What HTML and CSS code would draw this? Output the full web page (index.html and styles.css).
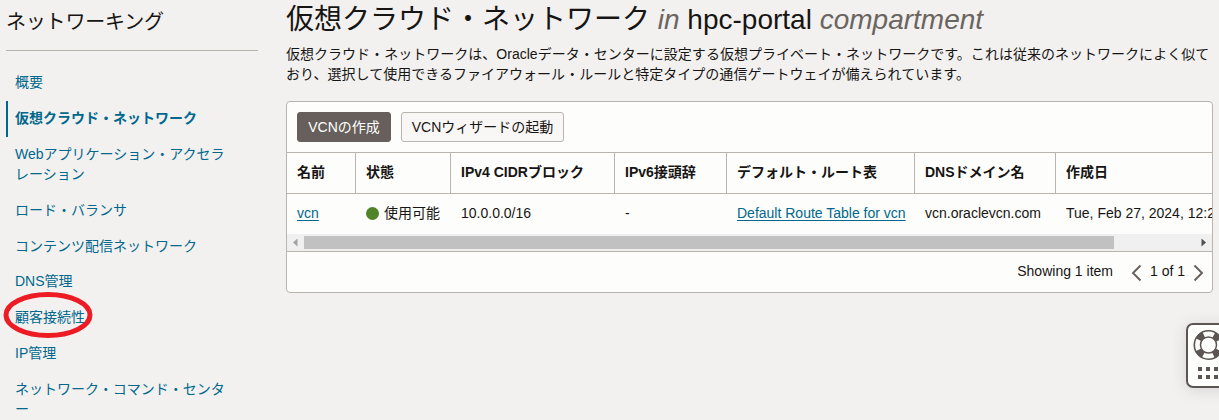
FILE: index.html
```html
<!DOCTYPE html>
<html lang="ja">
<head>
<meta charset="utf-8">
<title>仮想クラウド・ネットワーク</title>
<link rel="stylesheet" href="styles.css">
</head>
<body>
<div class="page">
  <aside class="sidebar">
    <h2 class="sidebar-title">ネットワーキング</h2>
    <nav class="nav">
      <a class="nav-item">概要</a>
      <a class="nav-item active">仮想クラウド・ネットワーク</a>
      <a class="nav-item">Webアプリケーション・アクセラ<br>レーション</a>
      <a class="nav-item">ロード・バランサ</a>
      <a class="nav-item">コンテンツ配信ネットワーク</a>
      <a class="nav-item">DNS管理</a>
      <a class="nav-item marked">顧客接続性
        <svg class="mark" width="90" height="48" viewBox="0 0 90 48"><ellipse cx="45" cy="24" rx="42" ry="20.500" fill="none" stroke="#ed1c24" stroke-width="5"/></svg>
      </a>
      <a class="nav-item">IP管理</a>
      <a class="nav-item">ネットワーク・コマンド・センタ<br>ー</a>
    </nav>
  </aside>
  <main class="main">
    <h1 class="title">仮想クラウド・ネットワーク <em>in</em> hpc-portal <em>compartment</em></h1>
    <p class="desc">仮想クラウド・ネットワークは、Oracleデータ・センターに設定する仮想プライベート・ネットワークです。これは従来のネットワークによく似て<br>おり、選択して使用できるファイアウォール・ルールと特定タイプの通信ゲートウェイが備えられています。</p>
    <section class="card">
      <div class="actions">
        <button class="btn primary">VCNの作成</button>
        <button class="btn">VCNウィザードの起動</button>
      </div>
      <div class="table">
        <div class="row head">
          <span class="cell">名前</span><span class="cell">状態</span><span class="cell">IPv4 CIDRブロック</span><span class="cell">IPv6接頭辞</span><span class="cell">デフォルト・ルート表</span><span class="cell">DNSドメイン名</span><span class="cell">作成日</span>
        </div>
        <div class="row">
          <span class="cell"><a class="link">vcn</a></span><span class="cell status"><i class="dot"></i>使用可能</span><span class="cell">10.0.0.0/16</span><span class="cell">-</span><span class="cell"><a class="link">Default Route Table for vcn</a></span><span class="cell">vcn.oraclevcn.com</span><span class="cell">Tue, Feb 27, 2024, 12:2</span>
        </div>
      </div>
      <div class="scrollbar">
        <svg width="17" height="17" viewBox="0 0 17 17"><path d="M10.500 4.500v8L6 8.500z" fill="#a3a3a3"/></svg>
        <div class="track"><div class="thumb"></div></div>
        <svg width="17" height="17" viewBox="0 0 17 17"><path d="M6.500 4.500v8l4.500-4z" fill="#505050"/></svg>
      </div>
      <div class="footer">
        <span class="count">Showing 1 item</span>
        <svg class="chev" width="11" height="18" viewBox="0 0 11 18"><path d="M9.500 1.500L2 9l7.500 7.500" fill="none" stroke="#665f5b" stroke-width="1.900"/></svg>
        <span class="pages">1 of 1</span>
        <svg class="chev" width="11" height="18" viewBox="0 0 11 18"><path d="M1.500 1.500L9 9l-7.500 7.500" fill="none" stroke="#665f5b" stroke-width="1.900"/></svg>
      </div>
    </section>
  </main>
  <div class="help">
    <svg width="32" height="61" viewBox="0 0 32 61">
      <g fill="none" stroke="#5b5652">
        <circle cx="20.500" cy="20" r="11.200" stroke-width="6.500" stroke-dasharray="7.200 10.393" stroke-dashoffset="-5.196"/>
        <circle cx="20.500" cy="20" r="14.200" stroke-width="1.600"/>
        <circle cx="20.500" cy="20" r="8" stroke-width="1.500"/>
      </g>
      <path d="M10 42h4v4h-4zM18 42h4v4h-4zM26 42h4v4h-4zM10 50h4v4h-4zM18 50h4v4h-4zM26 50h4v4h-4z" fill="#5b5652"/>
    </svg>
  </div>
</div>
</body>
</html>
```
FILE: styles.css
```css
* { box-sizing: border-box; }
body {
  margin: 0;
  background: #f3f1f0;
  color: #161513;
  font: 14px/20px "Liberation Sans", "Noto Sans CJK JP", sans-serif;
  overflow: hidden;
}
.page {
  position: relative;
  display: flex;
  height: 420px;
  overflow: hidden;
  white-space: nowrap;
}
.sidebar { width: 286px; padding-left: 6px; flex: none; }
.sidebar-title {
  margin: 0;
  width: 252px;
  height: 51px;
  padding-top: 7px;
  border-bottom: 1px solid #b9b4ab;
  font-size: 20px;
  line-height: 30px;
  font-weight: 400;
  letter-spacing: -0.2px;
}
.nav { display: flex; flex-direction: column; padding-top: 14px; }
.nav-item {
  padding: 8px 0 8px 7px;
  border-left: 2px solid transparent;
  line-height: 19.9px;
  color: #00688c;
}
.nav-item.active { font-weight: 700; border-color: #00688c; }
.marked { position: relative; }
.mark { position: absolute; left: -5px; top: -9px; }
.main { width: 927px; flex: none; }
.title { margin: 0; font-size: 28px; line-height: 40px; font-weight: 400; }
.title em { color: #6b6560; }
.desc { margin: 4px 0 0; letter-spacing: 0.02px; }
.card {
  height: 192px;
  margin-top: 17px;
  border: 1px solid #b9b4ae;
  border-radius: 4px;
  background: #fdfdfb;
  overflow: hidden;
}
.actions { display: flex; gap: 10px; height: 50px; padding: 10px; }
.btn {
  width: 163px;
  height: 30px;
  padding: 0;
  border: 1px solid #b9b4ae;
  border-radius: 3px;
  background: #f9f7f5;
  color: #161513;
  font: inherit;
  line-height: 28px;
}
.btn.primary { width: 94px; background: #665f5b; border-color: #665f5b; color: #fff; }
.row {
  display: grid;
  grid-template-columns: 68px 95px 164px 112px 188px 141px 157px;
  height: 40px;
}
.cell { padding: 9px 0 11px 10px; }
.head { height: 42px; border: solid #b9b4ae; border-width: 1px 0; font-weight: 700; }
.head .cell + .cell { border-left: 1px solid #b9b4ae; }
.row:not(.head) .cell + .cell { padding-left: 11px; }
.status { display: flex; align-items: center; gap: 5px; }
.dot { width: 13px; height: 13px; border-radius: 50%; background: #4f8428; }
.link { color: #00688c; text-decoration: underline; text-underline-offset: 2px; }
.scrollbar { display: flex; height: 17px; background: #f1f0f0; }
.track { flex: 1; padding: 2px 81px 2px 0; }
.thumb { height: 13px; background: #c1c1c1; }
.footer {
  display: flex;
  align-items: center;
  justify-content: flex-end;
  height: 41px;
  padding: 0 8px 2px 0;
  border-top: 1px solid #b9b4ae;
}
.count { margin-right: 18px; }
.pages { margin: 0 8px; }
.chev { position: relative; top: 2px; }
.help {
  position: absolute;
  left: 1186px;
  top: 323px;
  width: 60px;
  height: 65px;
  border: 2px solid #5b5652;
  border-radius: 7px;
  background: #fdfdfb;
  box-shadow: 0 2px 16px rgba(0, 0, 0, .12);
}
```
